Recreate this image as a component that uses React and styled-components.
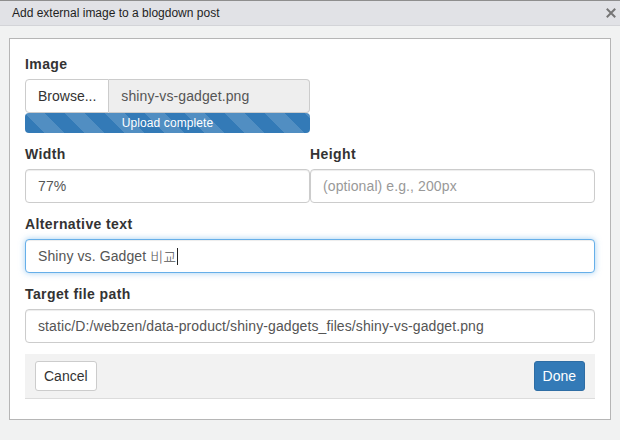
import React from "react";
import styled, { createGlobalStyle } from "styled-components";

const GlobalStyle = createGlobalStyle`
  html, body { margin: 0; padding: 0; background: #f1f2f2; }
  body { font-family: "Liberation Sans", Arial, "Noto Sans CJK KR", sans-serif; color: #333; }
  * { box-sizing: border-box; }
`;

const Window = styled.div`
  width: 620px;
  height: 440px;
  display: flex;
  flex-direction: column;
  background: #f1f2f2;
  overflow: hidden;
`;

const TitleBar = styled.div`
  height: 26px;
  flex: none;
  display: flex;
  align-items: center;
  justify-content: space-between;
  padding: 0 3px 0 12px;
  background: #e1e2e6;
  border-top: 1px solid #8e8e8e;
  border-bottom: 1px solid #d3d4d8;
  font-family: "Liberation Sans", Arial, sans-serif;
  font-size: 12px;
  color: #1e1e1e;
`;

const Close = styled.button`
  border: 0;
  background: transparent;
  padding: 0;
  width: 12px;
  height: 12px;
  display: flex;
  align-items: center;
  justify-content: center;
  color: #767676;
`;

const Body = styled.div`
  padding: 12px 9px 0 9px;
`;

const Panel = styled.div`
  background: #fff;
  border: 1px solid #b6b6b6;
  padding: 15px 15px 20px 15px;
`;

const Group = styled.div`
  margin-bottom: 11px;
`;

const HalfGroup = styled(Group)`
  width: 50%;
`;

const Label = styled.label`
  display: block;
  font-size: 14px;
  font-weight: bold;
  line-height: 20px;
  letter-spacing: 0.4px;
  margin-bottom: 5px;
  color: #333;
`;

const Row = styled.div`
  display: grid;
  grid-template-columns: 1fr 1fr;
`;

const FileGroup = styled.div`
  display: flex;
  height: 34px;
`;

const BrowseButton = styled.span`
  flex: none;
  display: flex;
  align-items: center;
  padding: 0 12px;
  background: #fff;
  border: 1px solid #ccc;
  border-radius: 4px 0 0 4px;
  font-size: 14px;
  color: #333;
`;

const FileName = styled.span`
  flex: 1;
  display: flex;
  align-items: center;
  padding: 0 12px;
  background: #eee;
  border: 1px solid #ccc;
  border-left: 0;
  border-radius: 0 4px 4px 0;
  font-size: 14px;
  letter-spacing: 0.1px;
  color: #555;
`;

const Progress = styled.div`
  height: 20px;
  border-radius: 4px;
  background-color: #337ab7;
  background-image: linear-gradient(
    45deg,
    rgba(255, 255, 255, 0.15) 25%,
    transparent 25%,
    transparent 50%,
    rgba(255, 255, 255, 0.15) 50%,
    rgba(255, 255, 255, 0.15) 75%,
    transparent 75%,
    transparent
  );
  background-size: 40px 40px;
  color: #fff;
  font-size: 12px;
  line-height: 20px;
  letter-spacing: 0.1px;
  text-align: center;
`;

const Input = styled.div`
  height: 34px;
  display: flex;
  align-items: center;
  padding: 6px 12px;
  font-size: 14px;
  line-height: 20px;
  letter-spacing: 0.1px;
  color: ${(p) => (p.$placeholder ? "#999" : "#555")};
  background: #fff;
  border: 1px solid ${(p) => (p.$focused ? "#66afe9" : "#ccc")};
  border-radius: 4px;
  box-shadow: ${(p) =>
    p.$focused
      ? "inset 0 1px 1px rgba(0,0,0,.075), 0 0 6px rgba(102,175,233,.6)"
      : "inset 0 1px 1px rgba(0,0,0,.075)"};
  white-space: nowrap;
`;

const Korean = styled.span`
  font-family: "Noto Sans CJK KR", sans-serif;
  font-weight: 300;
  margin-left: 4px;
`;

const Caret = styled.span`
  display: inline-block;
  width: 1px;
  height: 17px;
  background: #222;
  margin-left: 1px;
`;

const Footer = styled.div`
  display: flex;
  justify-content: space-between;
  align-items: center;
  padding: 7px 10px;
  background: #f2f2f2;
  border-bottom: 1px solid #dcdcdc;
`;

const Button = styled.button`
  height: 30px;
  padding: 4px 8px;
  font-family: "Liberation Sans", Arial, sans-serif;
  font-size: 14px;
  line-height: 20px;
  border-radius: 3px;
  border: 1px solid ${(p) => (p.$primary ? "#2e6da4" : "#ccc")};
  background: ${(p) => (p.$primary ? "#337ab7" : "#fff")};
  color: ${(p) => (p.$primary ? "#fff" : "#333")};
`;

export default function App() {
  return (
    <>
      <GlobalStyle />
      <Window>
        <TitleBar>
          <span>Add external image to a blogdown post</span>
          <Close aria-label="Close">
            <svg width="10" height="10" viewBox="0 0 10 10">
              <path d="M1.5 1.5 L8.5 8.5 M8.5 1.5 L1.5 8.5" stroke="currentColor" strokeWidth="2" strokeLinecap="square" />
            </svg>
          </Close>
        </TitleBar>
        <Body>
          <Panel>
            <HalfGroup>
              <Label>Image</Label>
              <FileGroup>
                <BrowseButton>Browse...</BrowseButton>
                <FileName>shiny-vs-gadget.png</FileName>
              </FileGroup>
              <Progress>Upload complete</Progress>
            </HalfGroup>
            <Row>
              <Group>
                <Label>Width</Label>
                <Input>77%</Input>
              </Group>
              <Group>
                <Label>Height</Label>
                <Input $placeholder>(optional) e.g., 200px</Input>
              </Group>
            </Row>
            <Group>
              <Label>Alternative text</Label>
              <Input $focused>
                Shiny vs. Gadget<Korean>비교</Korean>
                <Caret />
              </Input>
            </Group>
            <Group>
              <Label>Target file path</Label>
              <Input>static/D:/webzen/data-product/shiny-gadgets_files/shiny-vs-gadget.png</Input>
            </Group>
            <Footer>
              <Button>Cancel</Button>
              <Button $primary>Done</Button>
            </Footer>
          </Panel>
        </Body>
      </Window>
    </>
  );
}
